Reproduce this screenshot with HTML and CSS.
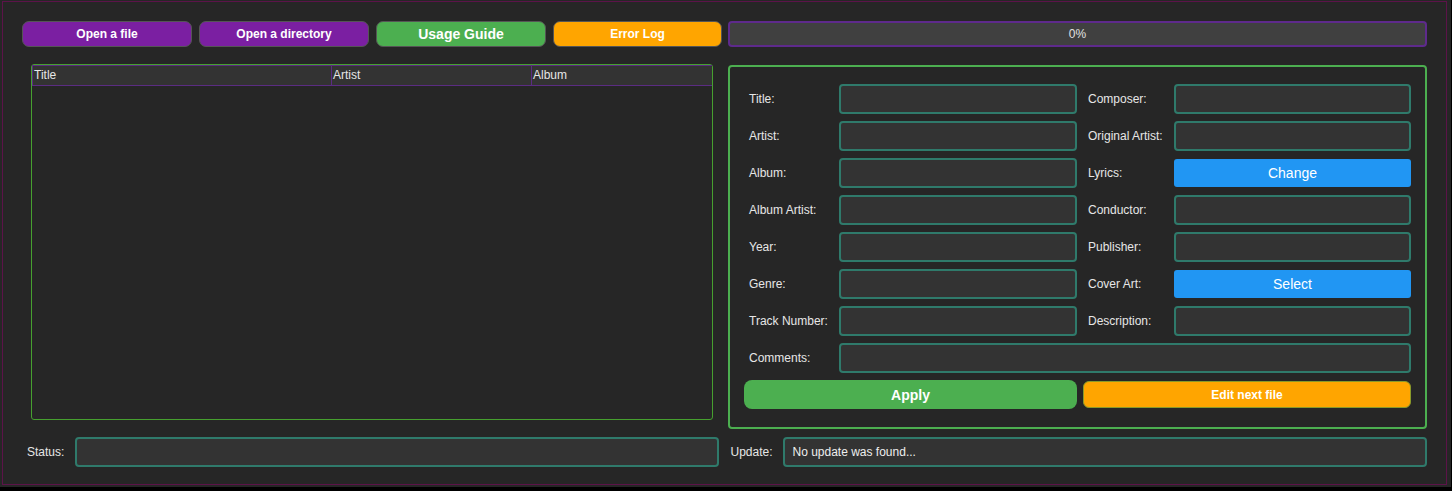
FILE: index.html
```html
<!DOCTYPE html>
<html>
<head>
<meta charset="utf-8">
<link rel="stylesheet" href="styles.css">
</head>
<body>
<div class="screen">
  <div class="app">
    <div class="toolbar">
      <button class="btn btn-purple">Open a file</button>
      <button class="btn btn-purple">Open a directory</button>
      <button class="btn btn-green btn-lg">Usage Guide</button>
      <button class="btn btn-orange btn-last">Error Log</button>
      <div class="progress">0%</div>
    </div>
    <div class="main">
      <div class="table-frame">
        <div class="thead">
          <div class="th th-title">Title</div>
          <div class="th th-artist">Artist</div>
          <div class="th th-album">Album</div>
        </div>
      </div>
      <div class="panel">
        <div class="form">
          <div class="lbl">Title:</div><div class="field"></div><div class="sp"></div>
          <div class="lbl">Composer:</div><div class="field"></div>

          <div class="lbl">Artist:</div><div class="field"></div><div class="sp"></div>
          <div class="lbl">Original Artist:</div><div class="field"></div>

          <div class="lbl">Album:</div><div class="field"></div><div class="sp"></div>
          <div class="lbl">Lyrics:</div><div class="blue-btn">Change</div>

          <div class="lbl">Album Artist:</div><div class="field"></div><div class="sp"></div>
          <div class="lbl">Conductor:</div><div class="field"></div>

          <div class="lbl">Year:</div><div class="field"></div><div class="sp"></div>
          <div class="lbl">Publisher:</div><div class="field"></div>

          <div class="lbl">Genre:</div><div class="field"></div><div class="sp"></div>
          <div class="lbl">Cover Art:</div><div class="blue-btn">Select</div>

          <div class="lbl">Track Number:</div><div class="field"></div><div class="sp"></div>
          <div class="lbl">Description:</div><div class="field"></div>

          <div class="lbl">Comments:</div><div class="field field-wide"></div>

          <div class="apply">Apply</div>
          <div class="next">Edit next file</div>
        </div>
      </div>
    </div>
    <div class="statusbar">
      <div class="slbl">Status:</div>
      <div class="field sfield"></div>
      <div class="slbl ulbl">Update:</div>
      <div class="field sfield">No update was found...</div>
    </div>
  </div>
</div>
</body>
</html>
```

FILE: styles.css
```css
* { box-sizing: border-box; }
html, body { margin: 0; padding: 0; }
body {
  background: #000;
  width: 1452px;
  height: 491px;
  font-family: "Liberation Sans", Arial, sans-serif;
  font-size: 12px;
  color: #e6e6e6;
}
.screen {
  width: 1451px;
  height: 487px;
  background: #262626;
  padding: 1px 0 0 2px;
}
.app {
  width: 1445px;
  height: 484px;
  border: 1px solid #5c1349;
  padding: 19px 19px 0 19px;
}
.toolbar {
  display: flex;
  gap: 7px;
  height: 26px;
}
.btn {
  width: 170px;
  height: 26px;
  border: 1px solid #555;
  border-radius: 7px;
  color: #fff;
  font-family: "Liberation Sans", Arial, sans-serif;
  font-weight: bold;
  font-size: 12px;
  padding: 0;
}
.btn-last { width: 169px; }
.btn-purple { background: #7b1fa2; }
.btn-green { background: #4caf50; }
.btn-orange { background: #ffa500; }
.btn-lg { font-size: 14px; }
.progress {
  flex: 1;
  height: 26px;
  background: #404040;
  border: 2px solid #5e2a8c;
  border-radius: 4px;
  display: flex;
  align-items: center;
  justify-content: center;
  color: #e0e0e0;
  font-size: 12px;
  margin-left: -1px;
}
.main {
  display: flex;
  align-items: flex-start;
  margin-top: 17px;
}
.table-frame {
  width: 682px;
  height: 356px;
  margin-left: 9px;
  border: 1px solid #46a02f;
  border-radius: 3px;
}
.thead {
  display: flex;
  height: 21px;
  background: #333;
  border-top: 1px solid #5b2c83;
  border-bottom: 1px solid #5b2c83;
  border-left: 1px solid #5b2c83;
}
.th {
  padding-left: 1px;
  line-height: 19px;
  font-size: 12px;
  color: #e6e6e6;
  border-right: 1px solid #5b2c83;
}
.th-title { width: 299px; }
.th-artist { width: 200px; }
.th-album { flex: 1; border-right: none; }
.panel {
  width: 699px;
  height: 364px;
  margin-left: 15px;
  margin-top: 1px;
  border: 2px solid #4caf50;
  border-radius: 4px;
  padding: 17px 0 0 14px;
}
.form {
  display: grid;
  grid-template-columns: 95px 238px 6px 91px 237px;
  grid-auto-rows: 30px;
  row-gap: 7px;
}
.lbl {
  padding-left: 5px;
  display: flex;
  align-items: center;
  font-size: 12px;
  color: #e6e6e6;
}
.field {
  background: #333;
  border: 2px solid #2f7a6b;
  border-radius: 4px;
  color: #eee;
  font-size: 12px;
}
.field-wide { grid-column: 2 / 6; }
.blue-btn {
  margin: 1px 0;
  background: #2196f3;
  border-radius: 3px;
  color: #fff;
  font-size: 14px;
  display: flex;
  align-items: center;
  justify-content: center;
}
.apply {
  grid-column: 1 / 3;
  height: 29px;
  background: #4caf50;
  border-radius: 8px;
  color: #fff;
  font-weight: bold;
  font-size: 14px;
  display: flex;
  align-items: center;
  justify-content: center;
}
.next {
  grid-column: 4 / 6;
  grid-column-start: 3;
  margin-left: 6px;
  margin-top: 1px;
  height: 27px;
  background: #ffa500;
  border: 1px solid #8a9a2a;
  border-radius: 6px;
  color: #fff;
  font-weight: bold;
  font-size: 12px;
  display: flex;
  align-items: center;
  justify-content: center;
}
.statusbar {
  display: flex;
  align-items: center;
  margin-top: 8px;
  height: 30px;
}
.slbl {
  width: 53px;
  padding-left: 5px;
  font-size: 12px;
  color: #e6e6e6;
}
.ulbl {
  margin-left: 10px;
  width: 55px;
  padding-left: 2px;
}
.sfield {
  width: 644px;
  height: 30px;
  display: flex;
  align-items: center;
  padding-left: 7px;
}
```
